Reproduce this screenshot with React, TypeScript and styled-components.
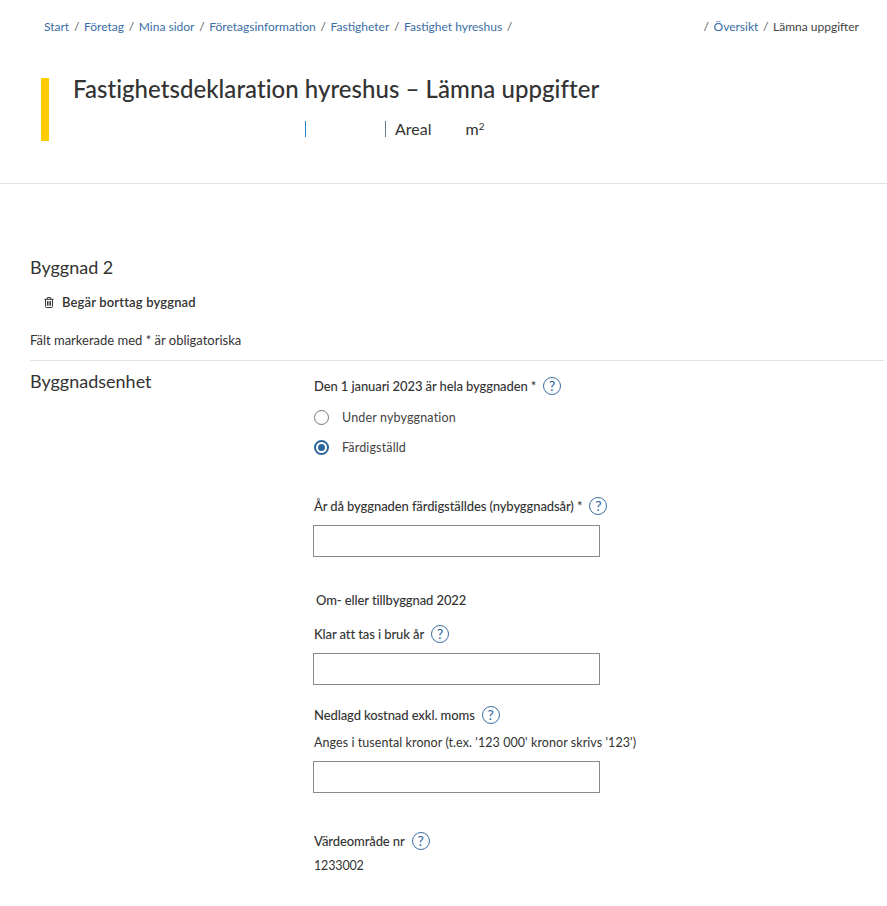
import React from "react";
import styled, { createGlobalStyle } from "styled-components";

const Global = createGlobalStyle`
  html, body { margin: 0; padding: 0; background: #fff; }
  body { font-family: Lato, "Open Sans", sans-serif; color: #333; }
`;

const Page = styled.div`
  width: 887px;
  height: 906px;
  overflow: hidden;
`;

const Breadcrumbs = styled.nav`
  display: flex;
  justify-content: space-between;
  height: 17px;
  padding: 18px 28px 0 44px;
  font-size: 12px;
  line-height: 17px;
`;

const CrumbGroup = styled.div`
  display: flex;
`;

const CrumbLink = styled.a`
  color: #3a6ea5;
`;

const CrumbCurrent = styled.span`
  color: #444;
`;

const Separator = styled.span`
  color: #555;
  margin: 0 4.7px;
`;

const RightSeparator = styled(Separator)`
  margin-left: 0;
`;

const Hero = styled.header`
  display: flex;
  margin: 43px 0 0 41px;
  height: 63px;
`;

const Accent = styled.div`
  width: 8px;
  background: #ffcc00;
`;

const HeroText = styled.div`
  margin-left: 24px;
`;

const Title = styled.h1`
  margin: -1px 0 0;
  font-size: 24px;
  line-height: 24px;
  font-weight: 500;
  letter-spacing: 0.04px;
  color: #333;
`;

const Meta = styled.div`
  display: flex;
  align-items: center;
  margin-top: 18px;
  height: 20px;
  font-size: 16px;
  line-height: 20px;
  color: #333;
`;

const MetaBar = styled.span<{ $left: number; $color: string }>`
  width: 1px;
  height: 16px;
  margin-left: ${(p) => p.$left}px;
  background: ${(p) => p.$color};
`;

const MetaText = styled.span<{ $left: number }>`
  margin-left: ${(p) => p.$left}px;
`;

const Sup = styled.sup`
  font-size: 10px;
  line-height: 0;
  vertical-align: 5px;
`;

const Divider = styled.hr`
  border: 0;
  height: 1px;
  margin: 42px 0 0;
  background: #e2e2e2;
`;

const Content = styled.main`
  padding: 71px 3px 0 30px;
`;

const BuildingTitle = styled.h2`
  margin: 0;
  font-size: 18px;
  line-height: 24px;
  font-weight: 400;
  color: #333;
`;

const RemoveButton = styled.button`
  display: flex;
  align-items: center;
  gap: 8px;
  border: 0;
  background: none;
  padding: 0;
  margin: 14px 0 0 14px;
  font: 600 13px/18px Lato, sans-serif;
  letter-spacing: 0.15px;
  color: #333;
`;

const RequiredNote = styled.p`
  margin: 20px 0 0;
  font-size: 13px;
  line-height: 18px;
  color: #333;
`;

const SectionRule = styled.hr`
  border: 0;
  height: 1px;
  margin: 11px 0 0;
  background: #e2e2e2;
`;

const Section = styled.section`
  display: grid;
  grid-template-columns: 283px 1fr;
`;

const SectionTitle = styled.h3`
  margin: 8px 0 0;
  font-size: 18px;
  line-height: 24px;
  font-weight: 400;
  color: #333;
`;

const Form = styled.div`
  display: flex;
  flex-direction: column;
  align-items: flex-start;
  padding-top: 15px;
`;

const LabelRow = styled.div<{ $top?: number }>`
  display: flex;
  align-items: center;
  gap: 7px;
  height: 20px;
  margin-top: ${(p) => p.$top ?? 0}px;
  margin-left: 1px;
  font-size: 13px;
  line-height: 20px;
  font-weight: 500;
  letter-spacing: -0.1px;
  color: #333;
`;

const HelpCircle = styled.span`
  display: flex;
  align-items: center;
  justify-content: center;
  box-sizing: border-box;
  width: 18px;
  height: 18px;
  border: 1.5px solid #3a6ea5;
  border-radius: 50%;
  font-size: 14px;
  line-height: 1;
  letter-spacing: 0;
  color: #3a6ea5;
`;

const RadioRow = styled.label<{ $top: number }>`
  display: flex;
  align-items: center;
  gap: 13px;
  height: 20px;
  margin-top: ${(p) => p.$top}px;
  margin-left: 1px;
  font-size: 12.5px;
  letter-spacing: 0.15px;
  color: #444;
`;

const RadioOuter = styled.span<{ $checked?: boolean }>`
  display: flex;
  align-items: center;
  justify-content: center;
  box-sizing: border-box;
  width: 15px;
  height: 15px;
  border-radius: 50%;
  border: ${(p) => (p.$checked ? "2px solid #2c659d" : "1px solid #767676")};
`;

const RadioDot = styled.span`
  width: 7px;
  height: 7px;
  border-radius: 50%;
  background: #2c659d;
`;

const Field = styled.div<{ $top: number }>`
  box-sizing: border-box;
  width: 287px;
  height: 32px;
  margin-top: ${(p) => p.$top}px;
  border: 1px solid #8a8a8a;
  background: #fff;
`;

const Subheading = styled.div`
  margin: 33px 0 0 3px;
  height: 20px;
  font-size: 13px;
  line-height: 20px;
  font-weight: 500;
  letter-spacing: -0.1px;
  color: #333;
`;

const Hint = styled.div`
  margin: 9px 0 0 1px;
  height: 18px;
  font-size: 12.5px;
  line-height: 18px;
  letter-spacing: 0.07px;
  color: #333;
`;

const Value = styled.div`
  margin: 6px 0 0 1px;
  font-size: 12.5px;
  line-height: 18px;
  letter-spacing: -0.15px;
  color: #333;
`;

const Help = () => <HelpCircle>?</HelpCircle>;

const Trash = () => (
  <svg width="10" height="11" viewBox="0 0 11 12" fill="none" stroke="#333" strokeWidth="1.1">
    <path d="M0.5 2.5h10" />
    <path d="M3.5 2.5v-1.5a.5.5 0 0 1 .5-.5h3a.5.5 0 0 1 .5.5v1.5" />
    <path d="M1.7 2.5v8a1 1 0 0 0 1 1h5.6a1 1 0 0 0 1-1v-8" />
    <path d="M3.9 4.5v5M5.5 4.5v5M7.1 4.5v5" />
  </svg>
);

const leftCrumbs = ["Start", "Företag", "Mina sidor", "Företagsinformation", "Fastigheter", "Fastighet hyreshus"];

export default function App() {
  return (
    <Page>
      <Global />
      <Breadcrumbs>
        <CrumbGroup>
          {leftCrumbs.map((c) => (
            <React.Fragment key={c}>
              <CrumbLink>{c}</CrumbLink>
              <Separator>/</Separator>
            </React.Fragment>
          ))}
        </CrumbGroup>
        <CrumbGroup>
          <RightSeparator>/</RightSeparator>
          <CrumbLink>Översikt</CrumbLink>
          <Separator>/</Separator>
          <CrumbCurrent>Lämna uppgifter</CrumbCurrent>
        </CrumbGroup>
      </Breadcrumbs>
      <Hero>
        <Accent />
        <HeroText>
          <Title>Fastighetsdeklaration hyreshus – Lämna uppgifter</Title>
          <Meta>
            <MetaBar $left={232} $color="#2b83c4" />
            <MetaBar $left={79} $color="#5f7f99" />
            <MetaText $left={9}>Areal</MetaText>
            <MetaText $left={34}>
              m<Sup>2</Sup>
            </MetaText>
          </Meta>
        </HeroText>
      </Hero>
      <Divider />
      <Content>
        <BuildingTitle>Byggnad 2</BuildingTitle>
        <RemoveButton>
          <Trash />
          Begär borttag byggnad
        </RemoveButton>
        <RequiredNote>Fält markerade med * är obligatoriska</RequiredNote>
        <SectionRule />
        <Section>
          <SectionTitle>Byggnadsenhet</SectionTitle>
          <Form>
            <LabelRow>
              Den 1 januari 2023 är hela byggnaden * <Help />
            </LabelRow>
            <RadioRow $top={11}>
              <RadioOuter />
              Under nybyggnation
            </RadioRow>
            <RadioRow $top={10}>
              <RadioOuter $checked>
                <RadioDot />
              </RadioOuter>
              Färdigställd
            </RadioRow>
            <LabelRow $top={39}>
              År då byggnaden färdigställdes (nybyggnadsår) * <Help />
            </LabelRow>
            <Field $top={9} />
            <Subheading>Om- eller tillbyggnad 2022</Subheading>
            <LabelRow $top={14}>
              Klar att tas i bruk år <Help />
            </LabelRow>
            <Field $top={9} />
            <LabelRow $top={20}>
              Nedlagd kostnad exkl. moms <Help />
            </LabelRow>
            <Hint>Anges i tusental kronor (t.ex. '123 000' kronor skrivs '123')</Hint>
            <Field $top={9} />
            <LabelRow $top={38}>
              Värdeområde nr <Help />
            </LabelRow>
            <Value>1233002</Value>
          </Form>
        </Section>
      </Content>
    </Page>
  );
}
